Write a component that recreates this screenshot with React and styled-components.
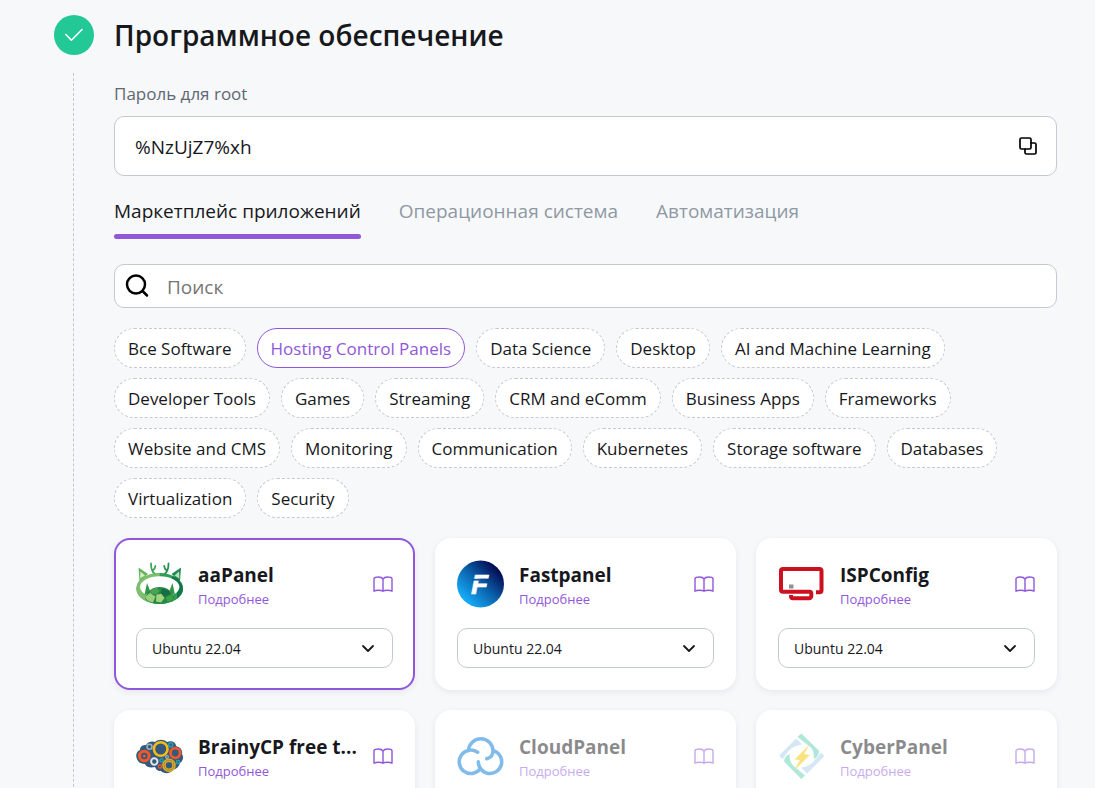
import React, { useState } from 'react'
import styled, { createGlobalStyle } from 'styled-components'

const GlobalStyle = createGlobalStyle`
  * {
    box-sizing: border-box;
  }

  body {
    margin: 0;
    background-color: #f7f8fa;
    color: #17181c;
    font-family: 'Open Sans', 'Noto Sans', sans-serif;
  }

  button, input, select {
    font-family: inherit;
    color: inherit;
  }
`

const Page = styled.main`
  height: 100vh;
  overflow-y: auto;
  scrollbar-width: none;
  padding: 15px 38px 0 54px;
`

const Step = styled.section`
  display: grid;
  grid-template-columns: 40px minmax(0, 1fr);
  column-gap: 20px;
`

const Rail = styled.div`
  display: flex;
  flex-direction: column;
`

const Badge = styled.div`
  display: flex;
  align-items: center;
  justify-content: center;
  height: 40px;
  border-radius: 50%;
  background-color: #22c997;
`

const RailLine = styled.div`
  flex: 1;
  margin: 18px 0 0 19px;
  border-left: 1px dashed #c3c8cf;
`

const Title = styled.h1`
  margin: 0;
  font-size: 28px;
  font-weight: 600;
  line-height: 40px;
`

const Label = styled.label`
  display: block;
  margin-top: 27px;
  font-size: 17px;
  line-height: 24px;
  color: #5f6772;
`

const Field = styled.div`
  display: flex;
  align-items: center;
  height: ${props => props.$height};
  margin-top: ${props => props.$top};
  padding: ${props => props.$padding};
  border: 1px solid #c5cad1;
  border-radius: 10px;
  background-color: #fff;
`

const Input = styled.input`
  flex: 1;
  min-width: 0;
  padding: 2px 0 0;
  border: 0;
  outline: 0;
  background: none;
  font-size: 19px;
  line-height: 28px;

  &::placeholder {
    color: #757575;
    opacity: 1;
  }
`

const SearchInput = styled(Input)`
  margin-left: 18px;
`

const IconButton = styled.button`
  display: flex;
  padding: 0;
  border: 0;
  background: none;
  color: ${props => props.$color};
  cursor: pointer;
`

const Tabs = styled.div`
  display: flex;
  gap: 38px;
  margin-top: 20px;
`

const Tab = styled.button`
  padding: 0;
  border: 0;
  background: none;
  font-size: 19px;
  line-height: 30px;
  color: ${props => props.$active ? '#17181c' : '#8f98a3'};
  cursor: pointer;

  &::after {
    content: '';
    display: block;
    height: 5px;
    margin-top: 8px;
    border-radius: 3px;
    background-color: ${props => props.$active ? '#9157da' : 'transparent'};
  }
`

const Chips = styled.div`
  display: flex;
  flex-wrap: wrap;
  gap: 10px 11px;
  margin-top: 20px;
`

const Chip = styled.button`
  height: 40px;
  padding: 2px 13px 0;
  border: 1px ${props => props.$active ? 'solid #9157da' : 'dashed #c5cad1'};
  border-radius: 20px;
  background-color: #fff;
  font-size: 17px;
  line-height: 24px;
  color: ${props => props.$active ? '#9157da' : '#17181c'};
  cursor: pointer;
`

const Cards = styled.div`
  display: grid;
  grid-template-columns: repeat(3, minmax(0, 1fr));
  gap: 20px;
  margin-top: 20px;
  padding-bottom: 20px;
`

const Card = styled.article`
  padding: 20px;
  border: 2px solid ${props => props.$active ? '#9157da' : '#fff'};
  border-radius: 16px;
  background-color: #fff;
  box-shadow: 0 2px 6px rgba(30, 40, 60, 0.08);
`

const CardHead = styled.div`
  display: flex;
  align-items: center;
  height: 48px;
  opacity: ${props => props.$disabled ? 0.5 : 1};
`

const CardText = styled.div`
  flex: 1;
  min-width: 0;
  padding-top: 2px;
  margin: 0 14px;
`

const CardTitle = styled.h2`
  margin: 0;
  overflow: hidden;
  white-space: nowrap;
  font-size: 19px;
  font-weight: 700;
  line-height: 28px;
`

const More = styled.a`
  display: block;
  font-size: 13px;
  line-height: 20px;
  color: #9157da;
  text-decoration: none;
`

const SelectWrap = styled.div`
  display: grid;
  align-items: center;
  margin-top: 20px;

  > * {
    grid-area: 1 / 1;
  }

  svg {
    justify-self: end;
    margin-right: 18px;
    pointer-events: none;
  }
`

const Select = styled.select`
  appearance: none;
  width: 100%;
  height: 40px;
  padding: 0 40px 0 15px;
  border: 1px solid #c5cad1;
  border-radius: 10px;
  background-color: #fff;
  font-size: 14px;
`

const stroke = {
  fill: 'none',
  stroke: 'currentColor',
  strokeLinecap: 'round',
  strokeLinejoin: 'round'
}

const CheckIcon = () => (
  <svg width='20' height='20' viewBox='0 0 20 20' {...stroke} stroke='#fff' strokeWidth='1.6'>
    <path d='M1.8 9.5l5.6 5.7L18 4.5' />
  </svg>
)

const CopyIcon = () => (
  <svg width='18' height='18' viewBox='0 0 18 18' {...stroke} strokeWidth='1.7'>
    <rect x='1' y='1' width='11' height='11' rx='1.5' />
    <path d='M12 6h3.5A1.5 1.5 0 0 1 17 7.5v8a1.5 1.5 0 0 1-1.5 1.5h-8A1.5 1.5 0 0 1 6 15.5V12' />
  </svg>
)

const SearchIcon = () => (
  <svg width='24' height='24' viewBox='0 0 24 24' {...stroke} stroke='#000' strokeWidth='2.5'>
    <circle cx='11' cy='10.5' r='9' />
    <path d='M17.5 17l4.5 4.5' />
  </svg>
)

const BookIcon = () => (
  <svg width='20' height='18' viewBox='0 0 20 18' {...stroke} strokeWidth='1.4'>
    <path d='M10 4C9 2.5 7.5 2 5.5 2S1.5 2.4 1 3.5v12.7c1.2-.7 2.7-.9 4.5-.9s3.5.2 4.5.9c1-.7 2.7-.9 4.5-.9s3.3.2 4.5.9V3.5C18.5 2.4 16.5 2 14.5 2S11 2.5 10 4zM10 4v12.2' />
  </svg>
)

const ChevronIcon = () => (
  <svg width='14' height='10' viewBox='0 0 14 10' {...stroke} strokeWidth='1.8'>
    <path d='M2 3l5 5 5-5' />
  </svg>
)

const AaPanelLogo = () => (
  <svg width='48' height='48' viewBox='0 0 48 48'>
    <path d='M2.5 7.5l9.5 6.5-8.5 7z' fill='#63b35c' />
    <path d='M4.5 11.5l4.5 4-5 3z' fill='#d5ecc4' />
    <path d='M45 7.5l-9.5 6.5 8.5 7z' fill='#1c8a55' />
    <path d='M43 11.5l-4.5 4 5 3z' fill='#bfe0b5' />
    <path d='M18.5 13.5c-3-2-3.5-6-3.5-10M16.8 10.5c2-1.5 2.5-3 2.5-4.5' fill='none' stroke='#3fa55a' strokeWidth='1.8' strokeLinecap='round' />
    <path d='M29 13.5c3-2 3.5-6 3.5-10M30.7 10.5c-2-1.5-2.5-3-2.5-4.5' fill='none' stroke='#258f55' strokeWidth='1.8' strokeLinecap='round' />
    <ellipse cx='23.7' cy='28.5' rx='23.3' ry='15.5' fill='#2f9e57' />
    <path d='M.4 28.5C.4 20 10.5 13 23.7 13v31C10.5 44 .4 37 .4 28.5z' fill='#7cc06c' />
    <path d='M41 38.8c3.800-2.700 6-6.300 6-10.300 0-5-4-9.800-10-12.500l-2 3 6 9z' fill='#12784b' />
    <ellipse cx='23.7' cy='27' rx='19.7' ry='10.7' fill='#fff' />
    <path d='M11 23l3.500 9-6 3zM36.500 23l-3.500 9 6 3z' fill='#2f9648' />
    <path d='M9 39c1-7.500 7.500-12 14.700-12S37.500 31.500 38.500 39c-4 3.500-9 5-15 5S13 42.500 9 39z' fill='#258a49' />
    <path d='M14.500 30.500l6-3 3.200 3.500-3.200 3.500-6.500-1z' fill='#4aa351' />
    <path d='M9.500 36.500l4.500-3.500 5.500 3.500-2.500 6c-4-1-6-2.500-7.500-4z' fill='#9ace7b' />
    <path d='M20.500 34.500l5-.5 3 4-3.500 4.500-5-1z' fill='#a4d27a' />
    <path d='M26 28.500l6.500 2 2 3.500-6 3-3.500-4z' fill='#166c43' />
    <path d='M30 37.500l6-3.500 2 5-6.500 3.500z' fill='#3b9f43' />
  </svg>
)

const FastpanelLogo = () => (
  <svg width='48' height='48' viewBox='0 0 48 48'>
    <defs>
      <linearGradient id='fast' x1='0.15' y1='0.85' x2='0.85' y2='0.15'>
        <stop offset='0' stopColor='#16aefb' />
        <stop offset='0.5' stopColor='#0b63ad' />
        <stop offset='1' stopColor='#04084f' />
      </linearGradient>
    </defs>
    <circle cx='23.5' cy='24' r='23.5' fill='url(#fast)' />
    <text x='14' y='34' fill='#fff' stroke='#fff' strokeWidth='0.6' fontFamily='Liberation Sans, sans-serif' fontSize='28' fontWeight='700' fontStyle='italic'>F</text>
    <path d='M15 19.7h7' stroke='#0b5ca3' strokeWidth='1.8' />
  </svg>
)

const IspConfigLogo = () => (
  <svg width='48' height='48' viewBox='0 0 48 48' fill='none'>
    <path d='M38 32.2h3.5a2 2 0 0 0 2-2V11a2 2 0 0 0-2-2H5a2 2 0 0 0-2 2v18.700a2 2 0 0 0 2 2h26.500a1.800 1.800 0 0 1 1.800 1.800v2.500a2.300 2.300 0 0 1-2.300 2.300H15a2 2 0 0 1-2-2V35' stroke='#cd1020' strokeWidth='4' />
    <path d='M11 24.5h4.5v4H11z' fill='#8b9197' />
  </svg>
)

const gears = [
  [24.7, 17, 6.8, 2.6, '#f2bd15'],
  [8.3, 24, 4.8, 3, '#f0592a'],
  [39.3, 21, 4.8, 2.8, '#f0592a'],
  [33, 33.2, 5, 3.6, '#dcae22'],
  [13.5, 14.7, 2.5, 1.5, '#9fb0bf'],
  [18.3, 29.5, 3.2, 2, '#dfe6ec'],
  [34.7, 12.7, 2, 1.5, '#2a9fb5'],
  [25.5, 28.3, 1.6, 1.3, '#2a9fb5'],
  [42, 30, 1.6, 1.3, '#2a9fb5'],
  [24, 34.5, 1.6, 1.3, '#f0592a'],
  [31, 25, 1.4, 1.2, '#9fb0bf']
]

const BrainyLogo = () => (
  <svg width='48' height='48' viewBox='0 0 48 48'>
    <path d='M1 27c-2-4 0-8 3-9 0-4 3-5 6-5 2-4 7-4 9-3 3-3 9-3 12 0 4-2 9 0 9 4 4 1 7 4 6 8 2 3 1 7-2 9-1 4-4 6-7 7-3 4-9 4-12 1-4 0-5-2-6-4-5 1-9 0-10-3-4 0-7-2-8-5z' fill='#36587b' />
    {gears.map(([cx, cy, r, width, color]) => (
      <circle key={`${cx}-${cy}`} cx={cx} cy={cy} r={r} fill='none' stroke={color} strokeWidth={width} />
    ))}
    <circle cx='8.3' cy='24' r='1.5' fill='#f0592a' />
    <circle cx='33' cy='33.2' r='5' fill='none' stroke='#7c7440' strokeWidth='0.6' />
  </svg>
)

const CloudPanelLogo = () => (
  <svg width='48' height='48' viewBox='0 0 48 48' {...stroke} stroke='#057ad9' strokeWidth='3.5'>
    <path d='M11.5 18.5A12.2 12.2 0 0 1 23.7 6.8 12.3 12.3 0 0 1 36 19c0 4-2.5 6.8-6.3 7.8' />
    <path d='M20.7 20.3A11.7 11.7 0 1 0 23 37.2' />
    <path d='M37 18.8A11.7 11.7 0 1 1 21.3 29.7' />
  </svg>
)

const CyberPanelLogo = () => (
  <svg width='48' height='48' viewBox='0 0 48 48'>
    <path d='M23.3 1.5l18 17.5c-.5 4-2.5 6.5-5.5 8 .5-6-1-11-5.500-13.500L19.500 5z' fill='#5fd3b3' />
    <path d='M18.3 6.5l6 6C17.5 13 12 16.5 9.5 20.5L4.5 27 1 23.5z' fill='#add1ef' />
    <path d='M23.3 47L6 29.5c.5-4 2.5-6 5.5-7.500 0 7 2 11 6 13.500l9.500 8z' fill='#5fd3b3' />
    <path d='M29 41.5l-6-6c7-.5 11.5-4 14.5-8.5L43 20.500l3.500 3.500z' fill='#add1ef' />
    <path d='M32 12L16.5 27.5l5.5.5-6 10.500L32 23l-6-1z' fill='#f7c900' />
  </svg>
)

const tabs = ['Маркетплейс приложений', 'Операционная система', 'Автоматизация']

const categories = [
  'Все Software', 'Hosting Control Panels', 'Data Science', 'Desktop', 'AI and Machine Learning',
  'Developer Tools', 'Games', 'Streaming', 'CRM and eComm', 'Business Apps', 'Frameworks',
  'Website and CMS', 'Monitoring', 'Communication', 'Kubernetes', 'Storage software', 'Databases',
  'Virtualization', 'Security'
]

const apps = [
  { name: 'aaPanel', Logo: AaPanelLogo },
  { name: 'Fastpanel', Logo: FastpanelLogo },
  { name: 'ISPConfig', Logo: IspConfigLogo },
  { name: 'BrainyCP free t...', Logo: BrainyLogo },
  { name: 'CloudPanel', Logo: CloudPanelLogo, disabled: true },
  { name: 'CyberPanel', Logo: CyberPanelLogo, disabled: true }
]

const AppCard = ({ app, active, onSelect }) => (
  <Card $active={active} onClick={onSelect}>
    <CardHead $disabled={app.disabled}>
      <app.Logo />
      <CardText>
        <CardTitle>{app.name}</CardTitle>
        <More href='#'>Подробнее</More>
      </CardText>
      <IconButton type='button' $color='#9157da' aria-label={`${app.name} docs`}>
        <BookIcon />
      </IconButton>
    </CardHead>
    <SelectWrap>
      <Select aria-label={`${app.name} OS`} disabled={app.disabled}>
        <option>Ubuntu 22.04</option>
      </Select>
      <ChevronIcon />
    </SelectWrap>
  </Card>
)

const App = () => {
  const [tab, setTab] = useState(tabs[0])
  const [category, setCategory] = useState('Hosting Control Panels')
  const [selected, setSelected] = useState('aaPanel')

  return (
    <Page>
      <GlobalStyle />
      <Step>
        <Rail>
          <Badge><CheckIcon /></Badge>
          <RailLine />
        </Rail>
        <div>
          <Title>Программное обеспечение</Title>
          <Label htmlFor='password'>Пароль для root</Label>
          <Field $height='60px' $top='10px' $padding='0 19px 0 20px'>
            <Input id='password' defaultValue='%NzUjZ7%xh' />
            <IconButton type='button' $color='#000' aria-label='Copy'>
              <CopyIcon />
            </IconButton>
          </Field>
          <Tabs role='tablist'>
            {tabs.map(name => (
              <Tab key={name} type='button' role='tab' aria-selected={name === tab} $active={name === tab} onClick={() => setTab(name)}>
                {name}
              </Tab>
            ))}
          </Tabs>
          <Field as='label' $height='44px' $top='25px' $padding='0 18px 0 10px'>
            <SearchIcon />
            <SearchInput placeholder='Поиск' aria-label='Поиск' />
          </Field>
          <Chips>
            {categories.map(name => (
              <Chip key={name} type='button' $active={name === category} onClick={() => setCategory(name)}>
                {name}
              </Chip>
            ))}
          </Chips>
          <Cards>
            {apps.map(app => (
              <AppCard key={app.name} app={app} active={app.name === selected} onSelect={() => setSelected(app.name)} />
            ))}
          </Cards>
        </div>
      </Step>
    </Page>
  )
}

export default App
